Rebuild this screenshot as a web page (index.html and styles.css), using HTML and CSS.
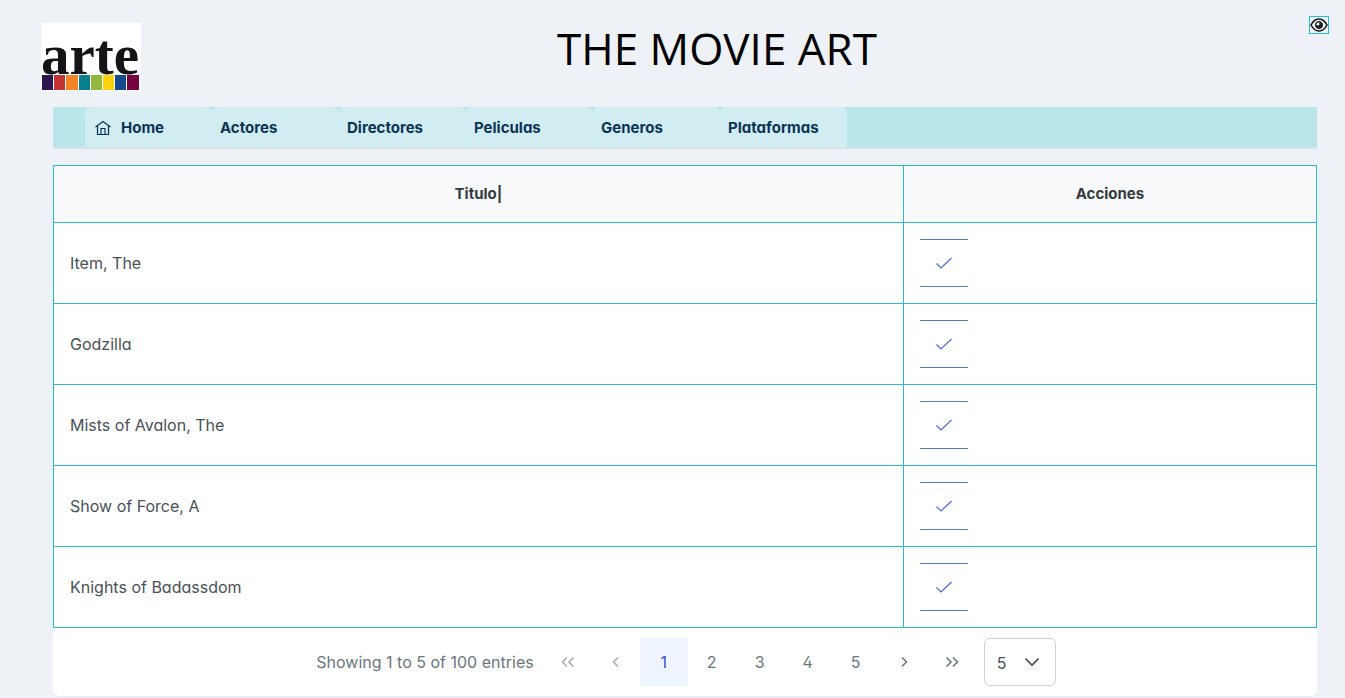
FILE: index.html
```html
<!DOCTYPE html>
<html lang="es">
<head>
<meta charset="utf-8">
<meta name="viewport" content="width=device-width, initial-scale=1">
<title>The Movie Art</title>
<link rel="stylesheet" href="styles.css">
</head>
<body>
<svg class="sprite" aria-hidden="true">
  <symbol id="check" viewBox="0 0 16 16"><path d="M0.5 8.5 5 13 15.5 3"/></symbol>
  <symbol id="left" viewBox="0 0 14 14"><path d="M9 2.500 4.500 7l4.500 4.500"/></symbol>
  <symbol id="double-left" viewBox="0 0 14 14"><path d="M6 2.500 1.500 7 6 11.500M12.500 2.500 8 7l4.500 4.500"/></symbol>
  <symbol id="down" viewBox="0 0 14 14"><path d="M.5 3.500 7 10l6.500-6.500"/></symbol>
</svg>
<header class="header">
  <svg class="logo" viewBox="0 0 100 68" role="img" aria-label="arte">
    <rect width="100" height="68" fill="#fff"/>
    <text class="logo-text" x="0" y="51">arte</text>
    <path fill="#2b1650" d="M1 52h11v15H1z"/><path fill="#c43432" d="M13 52h11v15H13z"/>
    <path fill="#f08228" d="M25 52h12v15H25z"/><path fill="#087f8d" d="M38 52h11v15H38z"/>
    <path fill="#91b83c" d="M50 52h11v15H50z"/><path fill="#fbd20e" d="M62 52h11v15H62z"/>
    <path fill="#174a8c" d="M74 52h11v15H74z"/><path fill="#75063f" d="M86 52h12v15H86z"/>
  </svg>
  <h1 class="title">THE MOVIE ART</h1>
  <button class="eye" type="button" aria-label="Ver">
    <svg viewBox="0 0 18 16" aria-hidden="true">
      <path d="M1 8C3 4.200 5.800 2 9 2S15 4.200 17 8c-2 3.800-4.800 6-8 6S3 11.800 1 8z" stroke="#111" stroke-width="1.500"/>
      <circle cx="9" cy="8" r="3.500" fill="#222" stroke="#111" stroke-width="1"/><path d="M9 5.500v2.500H6.600A2.500 2.500 0 0 1 9 5.500z" fill="#fff" stroke="#fff" stroke-width=".5"/>
    </svg>
  </button>
</header>
<main class="content">
  <nav class="menu">
    <a class="tab" href="#"><svg class="home" viewBox="0 0 16 16" aria-hidden="true"><path d="M.5 7 8 1.500 15.500 7M2.500 6v8.500h11V6M6 14.500v-6h4v6"/></svg>Home</a>
    <a class="tab" href="#">Actores</a>
    <a class="tab" href="#">Directores</a>
    <a class="tab" href="#">Peliculas</a>
    <a class="tab" href="#">Generos</a>
    <a class="tab" href="#">Plataformas</a>
  </nav>
  <section class="card">
    <table class="movies">
      <thead><tr><th class="col-title">Titulo|</th><th>Acciones</th></tr></thead>
      <tbody>
        <tr><td>Item, The</td><td><button class="pick" type="button" aria-label="Elegir"><svg><use href="#check"/></svg></button></td></tr>
        <tr><td>Godzilla</td><td><button class="pick" type="button" aria-label="Elegir"><svg><use href="#check"/></svg></button></td></tr>
        <tr><td>Mists of Avalon, The</td><td><button class="pick" type="button" aria-label="Elegir"><svg><use href="#check"/></svg></button></td></tr>
        <tr><td>Show of Force, A</td><td><button class="pick" type="button" aria-label="Elegir"><svg><use href="#check"/></svg></button></td></tr>
        <tr><td>Knights of Badassdom</td><td><button class="pick" type="button" aria-label="Elegir"><svg><use href="#check"/></svg></button></td></tr>
      </tbody>
    </table>
    <div class="paginator">
      <span class="summary">Showing 1 to 5 of 100 entries</span>
      <button class="page" type="button" disabled aria-label="First"><svg><use href="#double-left"/></svg></button>
      <button class="page" type="button" disabled aria-label="Previous"><svg><use href="#left"/></svg></button>
      <button class="page current" type="button">1</button>
      <button class="page" type="button">2</button>
      <button class="page" type="button">3</button>
      <button class="page" type="button">4</button>
      <button class="page" type="button">5</button>
      <button class="page next" type="button" aria-label="Next"><svg><use href="#left"/></svg></button>
      <button class="page next" type="button" aria-label="Last"><svg><use href="#double-left"/></svg></button>
      <div class="rows">
        <select aria-label="Rows per page"><option>5</option><option>10</option><option>20</option></select>
        <svg aria-hidden="true"><use href="#down"/></svg>
      </div>
    </div>
  </section>
</main>
</body>
</html>
```
FILE: styles.css
```css
* { box-sizing: border-box; }
body {
  margin: 0;
  background: #eef2f7;
  color: #495057;
  font: 400 16px/24px Inter, sans-serif;
  font-feature-settings: "cv02", "cv03", "cv04", "cv11";
}
button, select { font: inherit; font-feature-settings: inherit; color: inherit; }
svg { fill: none; stroke: currentColor; }
.sprite { display: none; }

.header { display: flex; align-items: flex-start; padding: 16px 16px 0 41px; height: 107px; }
.logo { width: 100px; height: 68px; margin-top: 7px; stroke: none; }
.logo-text { font: 700 57px "Liberation Serif", serif; fill: #151518; }
.title {
  flex: 1;
  margin: 0;
  padding: 8px 16px 0 0;
  color: #000;
  font: 500 44px/48px "Comic Sans MS", "Open Sans", sans-serif;
  text-align: center;
}
.eye { width: 20px; height: 18px; padding: 0; border: 1px solid #22bfd0; background: none; }
.eye svg { display: block; width: 18px; height: 16px; }

.content { padding: 0 28px 0 53px; }
.menu { display: flex; height: 42px; padding-left: 32px; background: #b9e6eb; border-bottom: 2px solid #d5e3ea; }
.tab {
  display: flex;
  align-items: center;
  gap: 10px;
  width: 127px;
  padding: 2px 8px 0;
  border-radius: 6px 6px 0 0;
  background: #d1edf1;
  color: #0b3454;
  font-weight: 700;
  font-size: 15px;
  text-decoration: none;
}
.home { width: 16px; height: 16px; margin-left: 2px; stroke-width: 1.2; }

.card { margin-top: 16px; background: #fff; border-bottom: 1px solid #e9ecef; border-radius: 0 0 6px 6px; }
.movies { width: 100%; border-collapse: collapse; table-layout: fixed; }
.movies th, .movies td { padding: 16px; border: 1px solid #2cbcc8; text-align: left; }
.movies th { background: #f8f9fa; color: #343a40; font-weight: 700; font-size: 15px; text-align: center; }
.col-title { width: 67.3%; }
.pick {
  display: flex;
  align-items: center;
  justify-content: center;
  width: 48px;
  height: 48px;
  padding: 0;
  border: solid #4c80c4;
  border-width: 1px 0;
  background: none;
  color: #4a6bd0;
}
.pick svg { width: 16px; height: 16px; stroke-width: 1.2; }

.paginator { display: flex; align-items: center; justify-content: center; padding: 10px 14px 10px 16px; color: #6c757d; }
.summary { margin-right: 10px; }
.page {
  display: flex;
  align-items: center;
  justify-content: center;
  width: 48px;
  height: 48px;
  padding: 0;
  border: 0;
  background: none;
}
.page svg { width: 14px; height: 14px; stroke-width: 1.6; }
.page:disabled { opacity: 0.6; }
.page.current { background: #eef5ff; color: #3c4fc4; }
.next svg { transform: rotate(180deg); }
.rows { display: grid; align-items: center; width: 72px; margin-left: 8px; color: #495057; }
.rows select, .rows svg { grid-area: 1 / 1; }
.rows select {
  appearance: none;
  height: 48px;
  padding: 2px 12px 0;
  border: 1px solid #ced4da;
  border-radius: 6px;
  background: #fff;
}
.rows svg { justify-self: end; width: 14px; height: 14px; margin-right: 17px; stroke-width: 1.6; pointer-events: none; }
```
